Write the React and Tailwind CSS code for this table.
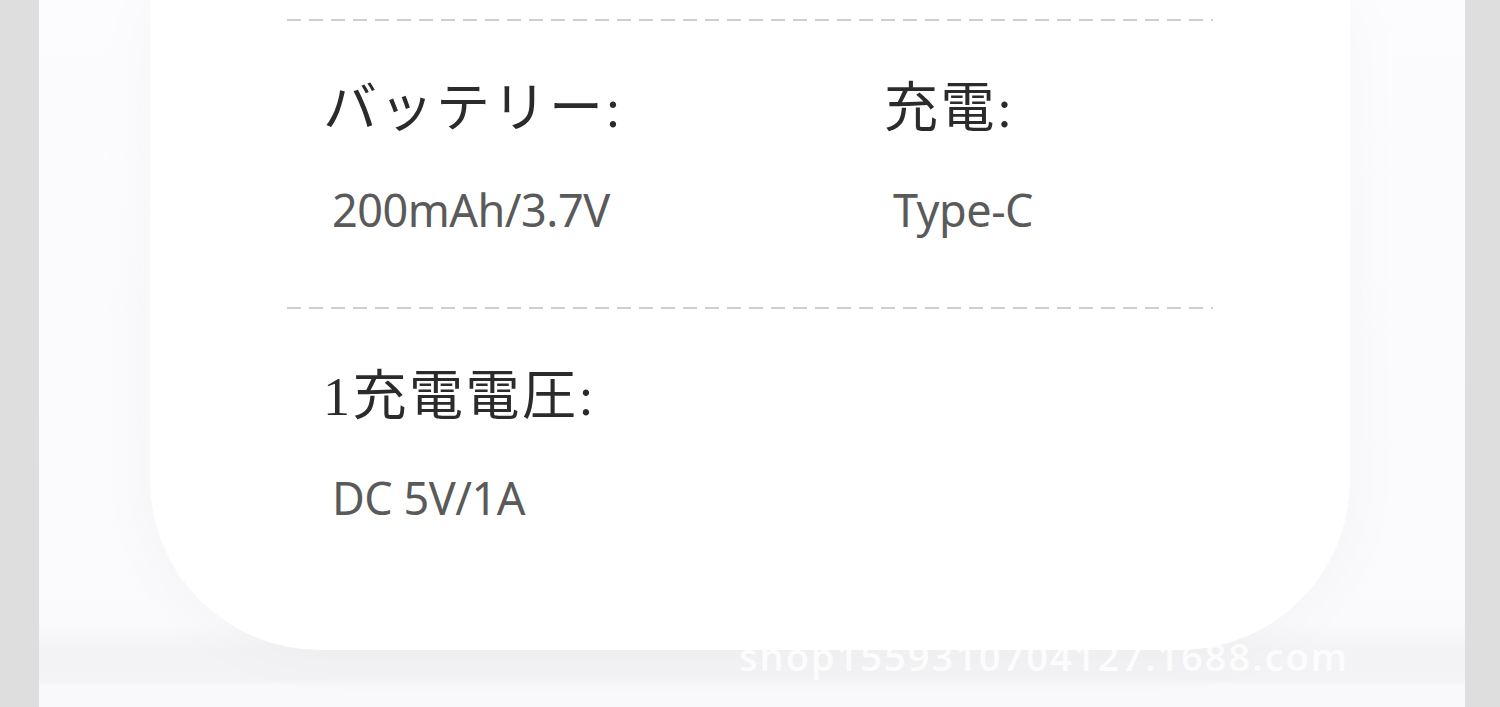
import React from "react";

const specs = [
  [
    { label: "バッテリー:", value: "200mAh/3.7V" },
    { label: "充電:", value: "Type-C" },
  ],
  [{ label: "1充電電圧:", value: "DC 5V/1A" }],
];

const Dashed = ({ className = "" }) => (
  <div
    className={`h-[2px] w-[926px] mx-auto bg-[repeating-linear-gradient(90deg,#cfcfcf_0_14px,transparent_14px_22px)] ${className}`}
  />
);

const SpecRow = ({ items }) => (
  <div className="grid grid-cols-[561px_1fr] pl-[36px] w-[926px] mx-auto">
    {items.map((it) => (
      <div key={it.label}>
        <div className="text-[54px] leading-none text-[#2b2b2b] tracking-[2.5px] font-['Liberation_Serif','Noto_Sans_CJK_JP',serif]">
          {it.label}
        </div>
        <div className="mt-[51px] pl-[9px] text-[45px] leading-none text-[#5a5a5a] font-['Noto_Sans','Noto_Sans_CJK_JP',sans-serif] tracking-[-0.5px]">
          {it.value}
        </div>
      </div>
    ))}
  </div>
);

export default function App() {
  return (
    <div className="w-[1500px] h-[707px] flex bg-[#dedede] overflow-hidden">
      <div className="w-[39px] shrink-0" />
      <div className="relative flex-1 bg-[linear-gradient(180deg,#fcfbfd_0%,#faf9fb_88%,#f3f2f4_92%,#f3f2f4_96%,#f9f8fa_97%)]">
        <div className="mx-[111px] mr-[115px] h-[650px] bg-white rounded-b-[170px] shadow-[0_0_70px_rgba(0,0,0,0.03)]">
          <div className="pt-[19px]">
            <Dashed />
          </div>
          <div className="pt-[61px]">
            <SpecRow items={specs[0]} />
          </div>
          <Dashed className="mt-[75px]" />
          <div className="pt-[61px]">
            <SpecRow items={specs[1]} />
          </div>
        </div>
        <div className="absolute left-[700px] top-[637px] text-[38px] leading-none text-white/80 tracking-[2px] font-['Open_Sans',sans-serif] font-semibold">
          shop1559310704127.1688.com
        </div>
      </div>
      <div className="w-[35px] shrink-0" />
    </div>
  );
}
